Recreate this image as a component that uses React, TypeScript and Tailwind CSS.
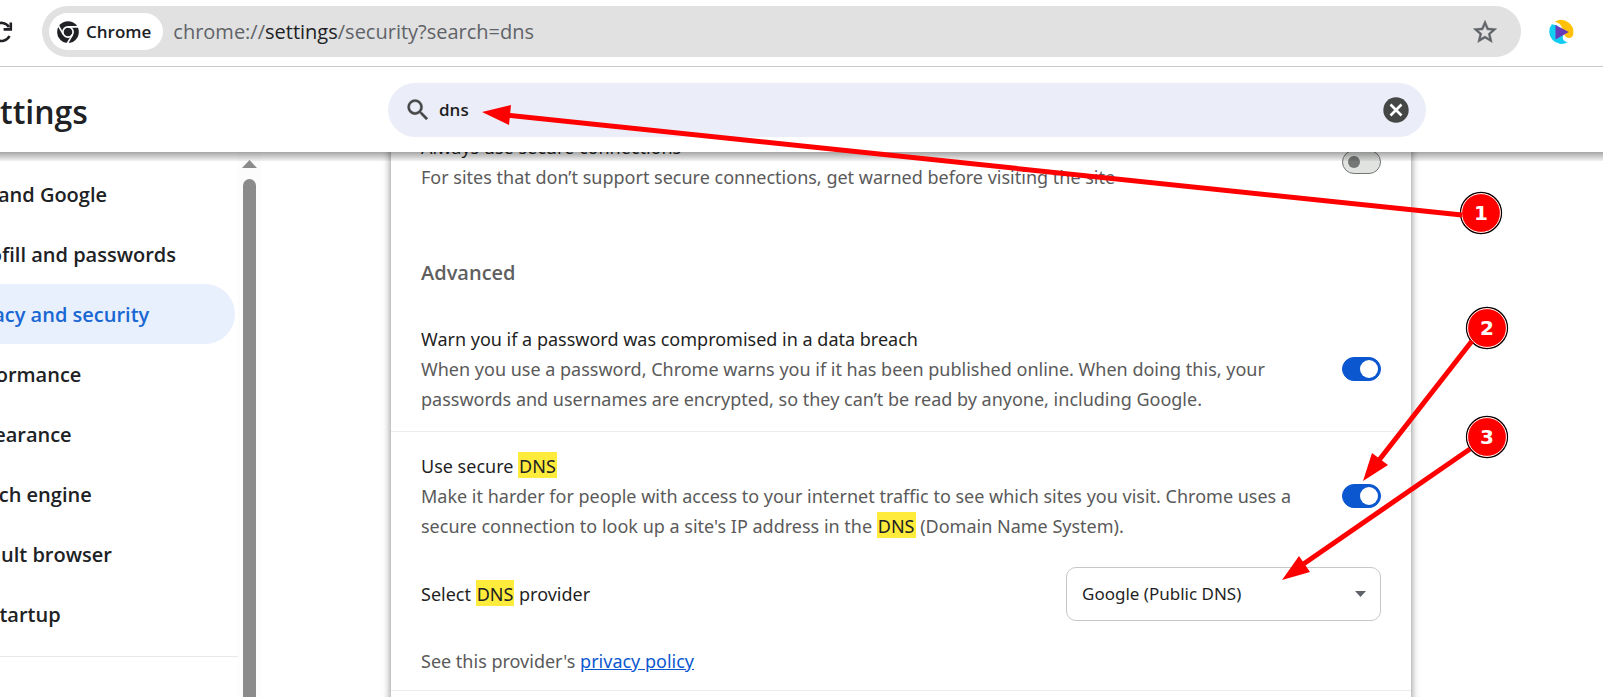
import React from "react";

function ReloadIcon() {
  return (
    <svg width="24" height="24" viewBox="0 0 24 24" fill="none" stroke="#202124" strokeWidth="2.6" aria-hidden="true">
      <path d="M20.500 16A9 9 0 1 1 20 7" />
      <path d="M21.800 2.500V9.400H14.600" />
    </svg>
  );
}

function ChromeIcon() {
  return (
    <svg width="22" height="22" viewBox="0 0 24 24" aria-hidden="true">
      <circle cx="12" cy="12" r="11.8" fill="#202124" />
      <circle cx="12" cy="12" r="5.6" fill="none" stroke="#fff" strokeWidth="1.8" />
      <path d="M12 6.4H23.500M7.100 14.800L1.500 5M16.900 14.800L11.200 24.600" stroke="#fff" strokeWidth="1.8" />
    </svg>
  );
}

function StarIcon() {
  return (
    <svg width="28" height="28" viewBox="0 0 24 24" fill="#5f6368" stroke="#5f6368" strokeWidth="0.4" aria-hidden="true">
      <path d="M22 9.24l-7.19-.62L12 2 9.19 8.63 2 9.24l5.46 4.73L5.82 21 12 17.27 18.18 21l-1.63-7.03L22 9.24zM12 15.4l-3.76 2.27 1-4.28-3.32-2.88 4.38-.38L12 6.1l1.71 4.04 4.38.38-3.32 2.88 1 4.28L12 15.4z" />
    </svg>
  );
}

function PlayIcon() {
  return (
    <svg width="26" height="26" viewBox="0 0 26 26" aria-hidden="true">
      <path d="M6.500 3A12.200 12.200 0 0 1 24.700 17C22 20.500 18 19 16.500 16L13 6.500C11.500 4 9 3.300 6.500 3Z" fill="#ffc107" />
      <path d="M4 5A12.200 12.200 0 0 0 20 23C16.500 23 14 20.500 15 16.500L10 7.500C8 5 6 6.500 4 5Z" fill="#12cdf2" />
      <path d="M7.500 6L20.800 13 7.500 20.500Z" fill="#673ab7" />
    </svg>
  );
}

function SearchIcon() {
  return (
    <svg width="28" height="28" viewBox="0 0 24 24" fill="#474747" stroke="#474747" strokeWidth="0.3" aria-hidden="true">
      <path d="M15.5 14h-.79l-.28-.27A6.471 6.471 0 0 0 16 9.500 6.500 6.500 0 1 0 9.500 16c1.610 0 3.090-.59 4.230-1.570l.27.28v.79l5 4.990L20.490 19l-4.990-5zm-6 0C7.010 14 5 11.990 5 9.500S7.010 5 9.500 5 14 7.010 14 9.500 11.990 14 9.500 14z" />
    </svg>
  );
}

function ClearIcon() {
  return (
    <svg width="26" height="26" viewBox="0 0 26 26" aria-hidden="true">
      <circle cx="13" cy="13" r="12.7" fill="#444746" />
      <path d="M7.500 7.500L18.500 18.500M18.500 7.500L7.500 18.500" stroke="#fff" strokeWidth="2.600" />
    </svg>
  );
}

function Toggle({ label, on }: { label: string; on: boolean }) {
  return (
    <label className="relative block h-6 w-[39px] shrink-0 cursor-pointer">
      <input type="checkbox" defaultChecked={on} aria-label={label} className="peer sr-only" />
      <span className="block h-6 w-full rounded-full border border-[#747775] bg-[#e1e3e1] peer-checked:border-[#0b57d0] peer-checked:bg-[#0b57d0]" />
      <span className="absolute left-[6px] top-[6px] size-3 rounded-full bg-[#747775] peer-checked:left-[18px] peer-checked:top-[3px] peer-checked:size-[18px] peer-checked:bg-white" />
    </label>
  );
}

function Mark({ children }: { children: React.ReactNode }) {
  return <mark className="bg-[#ffeb3b] px-px pt-0.5 text-[#202124]">{children}</mark>;
}

function SettingRow({ title, children, on, label }: { title: React.ReactNode; children: React.ReactNode; on: boolean; label: string }) {
  return (
    <div className="flex items-center justify-between gap-8">
      <div>
        <div className="text-[#1f1f1f]">{title}</div>
        <p className="text-[#5a5a5a]">{children}</p>
      </div>
      <Toggle label={label} on={on} />
    </div>
  );
}

const navItems = [
  "You and Google",
  "Autofill and passwords",
  "Privacy and security",
  "Performance",
  "Appearance",
  "Search engine",
  "Default browser",
  "On startup",
];

const callouts = [
  { n: "1", x: 1481, y: 213, from: [1462, 215], to: [505, 115], head: "482,112 511,105 509,125" },
  { n: "2", x: 1487, y: 328, from: [1472, 341], to: [1376, 464], head: "1363,481 1372,453 1388,465" },
  { n: "3", x: 1487, y: 437, from: [1470, 449], to: [1302, 565], head: "1282,580 1299,556 1310,572" },
];

function Callouts() {
  return (
    <div className="pointer-events-none absolute inset-0 z-20">
      <svg className="h-full w-full" aria-hidden="true">
        {callouts.map((c) => (
          <g key={c.n}>
            <circle cx={c.x} cy={c.y} r="20.500" fill="#f00" stroke="#000" strokeWidth="1.300" />
            <circle cx={c.x} cy={c.y} r="19.400" fill="none" stroke="#fff" strokeWidth="1" />
            <line x1={c.from[0]} y1={c.from[1]} x2={c.to[0]} y2={c.to[1]} stroke="#f00" strokeWidth="5" />
            <polygon points={c.head} fill="#f00" />
            <text x={c.x} y={c.y + 7} textAnchor="middle" fill="#fff" className="font-['DejaVu_Sans',sans-serif] text-[20px] font-bold">
              {c.n}
            </text>
          </g>
        ))}
      </svg>
    </div>
  );
}

export default function App() {
  return (
    <div className="relative flex h-screen flex-col overflow-hidden bg-white font-['Open_Sans',sans-serif] text-[18px] leading-[30px]">
      <div className="flex h-[67px] shrink-0 items-start border-b border-[#c9c9c9] pr-[29px] pt-[6px]">
        <button aria-label="Reload" className="-ml-[11px] mr-[29px] flex h-[51px] items-center">
          <ReloadIcon />
        </button>
        <div className="flex h-[51px] flex-1 items-center rounded-full bg-[#e1e1e1] pl-[7px] pr-[22px]">
          <button className="flex h-[37px] items-center gap-[7px] rounded-full bg-white pl-2 pr-3 text-[17px] font-semibold text-[#202124]">
            <ChromeIcon />
            Chrome
          </button>
          <div className="ml-[10px] flex-1 text-[20px] text-[#5f6368]">
            chrome://<span className="text-[#202124]">settings</span>/security?search=dns
          </div>
          <button aria-label="Bookmark this page">
            <StarIcon />
          </button>
        </div>
        <button aria-label="Video extension" className="ml-[27px] flex h-[51px] items-center">
          <PlayIcon />
        </button>
      </div>

      <header className="relative z-10 flex h-[85px] shrink-0 items-center bg-white pr-[177px]">
        <h1 className="-ml-[36px] w-[424px] pt-1 text-[32px] font-semibold text-[#202124]">Settings</h1>
        <label className="flex h-[54px] flex-1 items-center gap-[7px] rounded-full bg-[#ebeef8] pl-4 pr-[17px]">
          <SearchIcon />
          <input aria-label="Search settings" defaultValue="dns" className="min-w-0 flex-1 bg-transparent text-[17px] font-semibold text-[#1f1f1f] outline-none" />
          <button aria-label="Clear search">
            <ClearIcon />
          </button>
        </label>
        <div className="absolute inset-x-0 top-full h-[9px] bg-linear-to-b from-black/35 to-black/5" />
      </header>

      <div className="flex min-h-0 flex-1">
        <nav className="w-[238px] shrink-0 overflow-hidden pt-3">
          {navItems.map((item) => (
            <a
              key={item}
              href="#"
              className={`mr-[3px] flex h-[60px] items-center whitespace-nowrap rounded-r-full pt-0.5 text-[20px] font-semibold ${
                item === "Privacy and security" ? "bg-[#e8f0fe] text-[#1967d2]" : "text-[#202124]"
              }`}
            >
              <span className="-ml-[44px]">{item}</span>
            </a>
          ))}
          <hr className="mt-3 border-[#e8e8e8]" />
        </nav>
        <div className="flex w-[23px] shrink-0 flex-col items-center gap-[11px] bg-[#fcfcfc] pt-2">
          <svg width="15" height="8" viewBox="0 0 15 8" fill="#8b8b8b" aria-hidden="true">
            <path d="M7.500 0L15 8H0Z" />
          </svg>
          <div className="w-[13px] flex-1 rounded-t-full bg-[#8b8b8b]" />
        </div>

        <main className="min-w-0 flex-1 overflow-hidden pl-[130px] pr-[192px] font-['Noto_Sans',sans-serif]">
          <section className="-mt-5 h-[800px] bg-white shadow-[0_0_8px_rgba(0,0,0,0.5)]">
            <div className="px-[30px]">
              <SettingRow title="Always use secure connections" on={false} label="Always use secure connections">
                For sites that don’t support secure connections, get warned before visiting the site
              </SettingRow>
              <h2 className="pb-[36px] pt-[66px] font-['Open_Sans',sans-serif] text-[20px] font-semibold text-[#5f5f5f]">Advanced</h2>
              <SettingRow title="Warn you if a password was compromised in a data breach" on label="Warn you if a password was compromised">
                When you use a password, Chrome warns you if it has been published online. When doing this, your
                passwords and usernames are encrypted, so they can’t be read by anyone, including Google.
              </SettingRow>
            </div>
            <hr className="mb-[19px] mt-[17px] border-[#ececec]" />
            <div className="px-[30px]">
              <SettingRow title={<>Use secure <Mark>DNS</Mark></>} on label="Use secure DNS">
                Make it harder for people with access to your internet traffic to see which sites you visit. Chrome uses a
                secure connection to look up a site's IP address in the <Mark>DNS</Mark> (Domain Name System).
              </SettingRow>
              <div className="mt-[26px] flex items-center justify-between">
                <label htmlFor="provider" className="text-[#1f1f1f]">
                  Select <Mark>DNS</Mark> provider
                </label>
                <div className="relative w-[315px]">
                  <select id="provider" className="h-[54px] w-full appearance-none rounded-[10px] border border-[#c7c7c7] bg-white px-[15px] text-[17px] text-[#1f1f1f]">
                    <option>Google (Public DNS)</option>
                  </select>
                  <svg className="pointer-events-none absolute right-[15px] top-[24px]" width="11" height="6" viewBox="0 0 11 6" fill="#5f6368" aria-hidden="true">
                    <path d="M0 0H11L5.500 6Z" />
                  </svg>
                </div>
              </div>
              <p className="mt-[25px] text-[#5a5a5a]">
                See this provider's <a href="#" className="text-[#0b57d0] underline">privacy policy</a>
              </p>
            </div>
            <hr className="mt-[14px] border-[#ececec]" />
          </section>
        </main>
      </div>
      <Callouts />
    </div>
  );
}
